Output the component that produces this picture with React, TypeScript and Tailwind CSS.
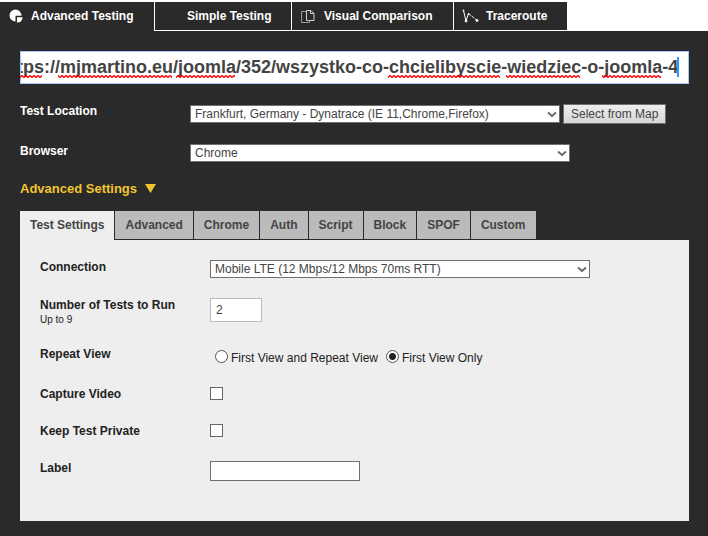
import React, { useLayoutEffect, useRef } from "react";

const squiggles = [
  [0, 22],
  [38, 114],
  [156, 59],
  [368, 112],
  [486, 74],
  [582, 59],
];

const settingsTabs = [
  "Test Settings",
  "Advanced",
  "Chrome",
  "Auth",
  "Script",
  "Block",
  "SPOF",
  "Custom",
];

function PieIcon() {
  return (
    <svg width="14" height="14" viewBox="0 0 14 14" fill="#fff">
      <path d="M6.5 0.5a6 6 0 1 0 0 12V6.8H12.4A6 6 0 0 0 6.5 0.5Z" />
      <path d="M8 8.2h5.5a5 5 0 0 1-5.5 5.3Z" />
    </svg>
  );
}

function PagesIcon() {
  return (
    <svg
      width="14"
      height="14"
      viewBox="0 0 14 14"
      fill="none"
      stroke="#d0d0d0"
    >
      <path d="M5.5 11.5V1.5h4.500l3 3v7ZM9.500 1.5v3h3.500" />
      <path d="M5 2.5H.5v11h8v-2" stroke="#999" />
    </svg>
  );
}

function RouteIcon() {
  return (
    <svg width="18" height="14" viewBox="0 0 18 14" fill="#fff" stroke="#fff">
      <path d="M1.500 1.500 4 12 6.500 4.500" fill="none" />
      <path d="M6.500 4.500 14.500 11" fill="none" strokeDasharray="3 1" />
      <circle cx="1.500" cy="1.500" r="0.500" />
      <circle cx="4" cy="12" r="1" />
      <circle cx="6.500" cy="5" r="0.500" />
      <circle cx="15" cy="11.500" r="1" />
    </svg>
  );
}

type SelectProps = {
  id: string;
  value: string;
  className: string;
};

function Select({ id, value, className }: SelectProps) {
  return (
    <div className={`relative ${className}`}>
      <select
        id={id}
        className="block h-[18px] w-full appearance-none rounded-none border border-[#707070] bg-white pr-5 pl-1 text-[12px] leading-4 text-[#444]"
      >
        <option>{value}</option>
      </select>
      <svg
        className="pointer-events-none absolute top-[6px] right-[3px]"
        width="10"
        height="7"
        viewBox="0 0 10 7"
        fill="none"
        stroke="#666"
        strokeWidth="1.800"
      >
        <path d="M1 1.500 5 5 9 1.500" />
      </svg>
    </div>
  );
}

function UrlField() {
  const ref = useRef<HTMLInputElement>(null);

  // keep the end of a long address in view, short of the trailing slash
  useLayoutEffect(() => {
    const el = ref.current;
    if (el) el.scrollLeft = el.scrollWidth - el.clientWidth - 4;
  }, []);

  return (
    <div className="relative">
      <input
        ref={ref}
        type="text"
        aria-label="Website URL"
        defaultValue="https://mjmartino.eu/joomla/352/wszystko-co-chcielibyscie-wiedziec-o-joomla-4/"
        className="block h-[33px] w-full border border-[#a5c7fe] bg-white pr-[9px] text-[18px] font-bold text-[#444] outline-none"
      />
      <span className="pointer-events-none absolute top-[6px] right-[10px] h-5 w-[2px] bg-[#3297fd]" />
      <svg
        className="pointer-events-none absolute top-[24px] left-0"
        width="669"
        height="3"
      >
        <defs>
          <pattern id="wave" width="4" height="3" patternUnits="userSpaceOnUse">
            <path
              d="M-1 1.500 0 2.500 2 .5 4 2.500 5 1.500"
              fill="none"
              stroke="#f00"
              strokeWidth="1.300"
            />
          </pattern>
        </defs>
        {squiggles.map(([x, w]) => (
          <rect key={x} x={x} width={w} height="3" fill="url(#wave)" />
        ))}
      </svg>
    </div>
  );
}

const box =
  "size-[13px] appearance-none border border-[#666] bg-white checked:bg-[#666]";
const radio =
  "size-[13px] appearance-none rounded-full border border-[#555] bg-white checked:bg-[radial-gradient(circle,#222_3px,#fff_4px)]";

function App() {
  return (
    <main className="min-h-screen bg-[#2a2a2a] font-['Liberation_Sans',Arial,sans-serif] text-[12px] leading-[14px] text-white">
      <nav className="flex h-[31px] bg-white pt-[2px] font-bold">
        <a
          href="#advanced"
          className="flex w-[154px] items-center gap-2 bg-[#2a2a2a] pb-px pl-[9px]"
        >
          <PieIcon />
          Advanced Testing
        </a>
        <div className="flex gap-px pb-px pl-px">
          <a
            href="#simple"
            className="flex w-[136px] items-center bg-[#2a2a2a] pl-8"
          >
            Simple Testing
          </a>
          <a
            href="#visual"
            className="flex w-[161px] items-center gap-[9px] bg-[#2a2a2a] pl-[9px]"
          >
            <PagesIcon />
            Visual Comparison
          </a>
          <a
            href="#traceroute"
            className="flex w-[113px] items-center gap-[6px] bg-[#2a2a2a] pl-2"
          >
            <RouteIcon />
            Traceroute
          </a>
        </div>
      </nav>

      <form className="pt-5 pr-[19px] pb-[15px] pl-5">
        <UrlField />

        <div className="mt-5 flex">
          <label htmlFor="location" className="w-[170px] font-bold">
            Test Location
          </label>
          <div className="flex items-center gap-[3px]">
            <Select
              id="location"
              value="Frankfurt, Germany - Dynatrace (IE 11,Chrome,Firefox)"
              className="w-[370px]"
            />
            <button
              type="button"
              className="h-5 border border-[#707070] bg-linear-to-b from-[#eee] to-[#d6d6d6] px-[7px] text-[#444]"
            >
              Select from Map
            </button>
          </div>
        </div>

        <div className="mt-5 flex">
          <label htmlFor="browser" className="w-[170px] font-bold">
            Browser
          </label>
          <Select id="browser" value="Chrome" className="w-[380px]" />
        </div>

        <button
          type="button"
          className="mt-5 flex items-center gap-2 text-[13px] font-bold text-[#f1c52e]"
        >
          Advanced Settings
          <svg
            className="mb-px"
            width="11"
            height="9"
            viewBox="0 0 11 9"
            fill="#f1c52e"
          >
            <path d="M0 0H11L5.500 9Z" />
          </svg>
        </button>

        <div className="mt-[15px] flex h-[29px] gap-px">
          {settingsTabs.map((tab, i) => (
            <button
              key={tab}
              type="button"
              className={
                i === 0
                  ? "bg-[#eee] px-[10px] pb-px font-bold text-[#444]"
                  : "mb-px bg-[#bbb] px-[10px] font-bold text-[#444]"
              }
            >
              {tab}
            </button>
          ))}
        </div>

        <div className="flex flex-col bg-[#eee] px-5 pt-5 pb-10 text-[#222]">
          <div className="flex">
            <label htmlFor="connection" className="w-[170px] font-bold">
              Connection
            </label>
            <Select
              id="connection"
              value="Mobile LTE (12 Mbps/12 Mbps 70ms RTT)"
              className="w-[380px]"
            />
          </div>

          <div className="mt-5 flex items-start">
            <label htmlFor="runs" className="w-[170px] font-bold">
              Number of Tests to Run
              <small className="block text-[10px] leading-4 font-normal">
                Up to 9
              </small>
            </label>
            <input
              id="runs"
              type="text"
              defaultValue="2"
              className="h-6 w-[52px] border border-[#bbb] bg-white px-[5px] text-[#444]"
            />
          </div>

          <div className="mt-[19px] flex">
            <span className="w-[175px] font-bold">Repeat View</span>
            <div className="flex gap-2 pt-[3px] leading-4">
              <label className="flex gap-[3px]">
                <input type="radio" name="view" className={radio} />
                First View and Repeat View
              </label>
              <label className="flex gap-[3px]">
                <input
                  type="radio"
                  name="view"
                  defaultChecked
                  className={radio}
                />
                First View Only
              </label>
            </div>
          </div>

          <div className="mt-[21px] flex">
            <label htmlFor="video" className="w-[170px] font-bold">
              Capture Video
            </label>
            <input id="video" type="checkbox" className={box} />
          </div>

          <div className="mt-[23px] flex">
            <label htmlFor="private" className="w-[170px] font-bold">
              Keep Test Private
            </label>
            <input id="private" type="checkbox" className={box} />
          </div>

          <div className="mt-[23px] flex">
            <label htmlFor="label" className="w-[170px] font-bold">
              Label
            </label>
            <input
              id="label"
              type="text"
              className="h-5 w-[150px] border border-[#707070] bg-white px-1 text-[#444]"
            />
          </div>
        </div>
      </form>
    </main>
  );
}

export default App;
